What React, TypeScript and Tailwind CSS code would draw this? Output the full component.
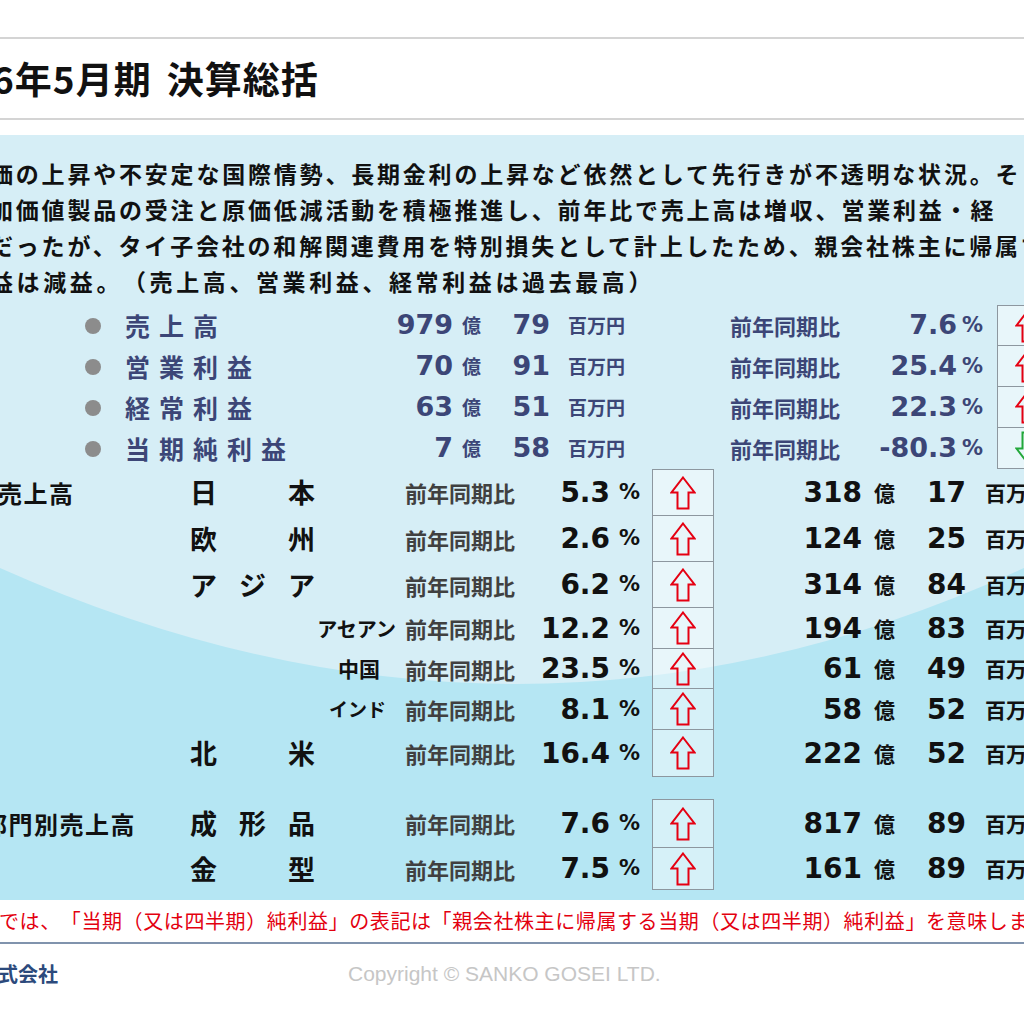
const jp = "font-['Noto_Sans_CJK_JP',sans-serif]"
const num = "font-['DejaVu_Sans','Noto_Sans_CJK_JP',sans-serif]"

type SummaryRow = { label: string; oku: string; man: string; pct: string; up: boolean }

const summary: SummaryRow[] = [
  { label: '売上高', oku: '979', man: '79', pct: '7.6', up: true },
  { label: '営業利益', oku: '70', man: '91', pct: '25.4', up: true },
  { label: '経常利益', oku: '63', man: '51', pct: '22.3', up: true },
  { label: '当期純利益', oku: '7', man: '58', pct: '-80.3', up: false },
]

type RegionRow = {
  label?: string
  labelShift?: string
  name?: string[]
  sub?: string
  subClass?: string
  pct: string
  oku: string
  man: string
  h: string
  first?: boolean
}

const regions: RegionRow[] = [
  { label: '売上高', labelShift: 'ml-[-2px]', name: ['日', '本'], pct: '5.3', oku: '318', man: '17', h: 'h-[47px]', first: true },
  { name: ['欧', '州'], pct: '2.6', oku: '124', man: '25', h: 'h-[46px]' },
  { name: ['ア', 'ジ', 'ア'], pct: '6.2', oku: '314', man: '84', h: 'h-[46px]' },
  { sub: 'アセアン', subClass: 'text-[20px] pr-[9px]', pct: '12.2', oku: '194', man: '83', h: 'h-[41px]' },
  { sub: '中国', subClass: 'text-[21px] pr-[25px]', pct: '23.5', oku: '61', man: '49', h: 'h-[40px]' },
  { sub: 'インド', subClass: 'text-[19px] pr-[19px]', pct: '8.1', oku: '58', man: '52', h: 'h-[41px]' },
  { name: ['北', '米'], pct: '16.4', oku: '222', man: '52', h: 'h-[47px]' },
]

const segments: RegionRow[] = [
  { label: '部門別売上高', labelShift: 'ml-[-17px]', name: ['成', '形', '品'], pct: '7.6', oku: '817', man: '89', h: 'h-[49px]', first: true },
  { name: ['金', '型'], pct: '7.5', oku: '161', man: '89', h: 'h-[42px]' },
]

function Arrow({ up }: { up: boolean }) {
  return (
    <svg width="26" height="34" viewBox="0 0 26 34" className={up ? '' : 'rotate-180'}>
      <polygon
        points="13,1.5 24.5,16.5 18.5,16.5 18.5,32.5 7.5,32.5 7.5,16.5 1.5,16.5"
        fill="none"
        stroke={up ? '#e50012' : '#23a83a'}
        strokeWidth="2"
      />
    </svg>
  )
}

function ArrowCell({ up, first }: { up: boolean; first?: boolean }) {
  return (
    <div
      className={`w-[62px] h-full border-x border-b border-[#8d979f] bg-white/45 flex items-center justify-center ${
        first ? 'border-t' : ''
      }`}
    >
      <Arrow up={up} />
    </div>
  )
}

function RegionLine({ row }: { row: RegionRow }) {
  return (
    <div className={`flex w-max items-center ${row.h}`}>
      <div className="w-[190px]">
        {row.label && (
          <span className={`block whitespace-nowrap text-[24px] font-bold tracking-[1.5px] ${row.labelShift}`}>
            {row.label}
          </span>
        )}
      </div>
      <div className="w-[215px]">
        {row.name ? (
          <div className="w-[125px] flex justify-between text-[27px] font-bold">
            {row.name.map((c, i) => (
              <span key={i}>{c}</span>
            ))}
          </div>
        ) : (
          <div className={`text-right font-bold whitespace-nowrap ${row.subClass}`}>{row.sub}</div>
        )}
      </div>
      <div className="w-[125px] text-[22px] font-bold text-[#404040]">前年同期比</div>
      <div className={`w-[80px] text-right text-[28px] font-bold ${num}`}>{row.pct}</div>
      <div className={`w-[42px] pl-[9px] text-[21px] font-bold ${num}`}>%</div>
      <ArrowCell up={true} first={row.first} />
      <div className={`w-[148px] text-right text-[28px] font-bold ${num}`}>{row.oku}</div>
      <div className="w-[53px] pl-[12px] text-[21px] font-bold">億</div>
      <div className={`w-[51px] text-right text-[28px] font-bold ${num}`}>{row.man}</div>
      <div className="pl-[19px] text-[21px] font-bold whitespace-nowrap">百万円</div>
    </div>
  )
}

export default function App() {
  return (
    <div className={`w-[1024px] h-[1024px] bg-white overflow-hidden text-[#111] [text-spacing-trim:space-all] ${jp}`}>
      {/* ヘッダー */}
      <div className="h-[37px]" />
      <div className="h-[81px] border-t-2 border-[#d4d4d4] flex items-center">
        <h1 className="ml-[-8px] flex gap-[15px] whitespace-nowrap text-[37px] font-bold tracking-[1px] leading-none">
          <span>6年5月期</span>
          <span>決算総括</span>
        </h1>
      </div>
      <div className="h-[17px] border-t-2 border-[#d4d4d4]" />

      {/* 本文パネル */}
      <div className="relative h-[765px] bg-[#d6eef6]">
        <svg className="absolute inset-0" width="1024" height="765" viewBox="0 0 1024 765" preserveAspectRatio="none">
          <path d="M0,433 Q520,665 1024,433 L1024,765 L0,765 Z" fill="#b5e6f3" />
        </svg>

        <div className="relative">
          <div className="pt-[20px] ml-[-10px] text-[23px] font-bold leading-[36px] tracking-[2.8px] whitespace-nowrap">
            <div>価の上昇や不安定な国際情勢、長期金利の上昇など依然として先行きが不透明な状況。そ</div>
            <div>加価値製品の受注と原価低減活動を積極推進し、前年比で売上高は増収、営業利益・経</div>
            <div>だったが、タイ子会社の和解関連費用を特別損失として計上したため、親会社株主に帰属す</div>
            <div className="tracking-[3.6px]">益は減益。（売上高、営業利益、経常利益は過去最高）</div>
          </div>

          {/* 連結業績 */}
          <div className="mt-[6px] text-[#3c4677]">
            {summary.map((s, i) => (
              <div key={s.label} className="flex w-max items-center h-[41px]">
                <div className="w-[85px]" />
                <div className="w-[16px] h-[16px] rounded-full bg-[#8c8c8c]" />
                <div className="w-[24px]" />
                <div className="w-[215px] text-[25px] font-bold tracking-[9px]">{s.label}</div>
                <div className={`w-[113px] text-right text-[27px] font-bold ${num}`}>{s.oku}</div>
                <div className="w-[50px] pl-[9px] text-[19px] font-bold">億</div>
                <div className={`w-[47px] text-right text-[27px] font-bold ${num}`}>{s.man}</div>
                <div className="w-[180px] pl-[18px] text-[19px] font-bold">百万円</div>
                <div className="w-[130px] text-[22px] font-bold">前年同期比</div>
                <div className={`w-[97px] text-right text-[27px] font-bold ${num}`}>{s.pct}</div>
                <div className={`w-[40px] pl-[5px] text-[21px] font-bold ${num}`}>%</div>
                <ArrowCell up={s.up} first={i === 0} />
              </div>
            ))}
          </div>

          {/* 地域別 */}
          <div>
            {regions.map((r, i) => (
              <RegionLine key={i} row={r} />
            ))}
          </div>

          {/* 部門別 */}
          <div className="mt-[22px]">
            {segments.map((r, i) => (
              <RegionLine key={i} row={r} />
            ))}
          </div>
        </div>
      </div>

      {/* 注記 */}
      <div className="h-[42px] flex items-center">
        <p className="ml-[-1px] whitespace-nowrap text-[20px] tracking-[0.6px] text-[#e3000f]">
          では、「当期（又は四半期）純利益」の表記は「親会社株主に帰属する当期（又は四半期）純利益」を意味しま
        </p>
      </div>
      <div className="h-[62px] border-t-2 border-[#8093ad] flex items-center">
        <div className="w-[350px] ml-[-2px] text-[20px] font-bold text-[#2c4a7c]">式会社</div>
        <div className="font-['Liberation_Sans',sans-serif] text-[21px] text-[#c6c6c6] whitespace-nowrap">
          Copyright © SANKO GOSEI LTD.
        </div>
      </div>
    </div>
  )
}
